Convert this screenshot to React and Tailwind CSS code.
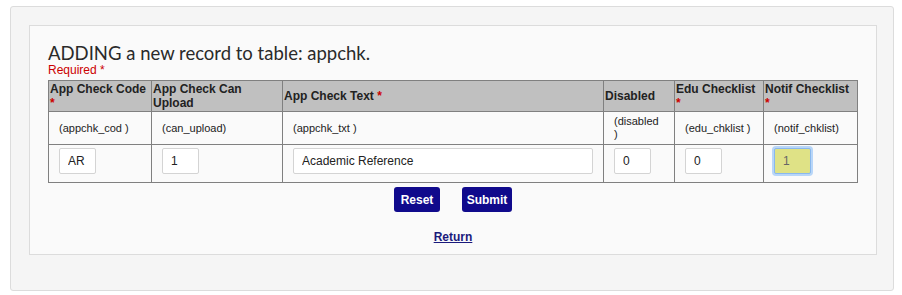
import React from 'react';

const cols = [
  { label: 'App Check Code', req: true, field: '(appchk_cod )', value: 'AR', w: 'w-[103px]' },
  { label: 'App Check Can Upload', req: false, field: '(can_upload)', value: '1', w: 'w-[131px]' },
  { label: 'App Check Text', req: true, inline: true, field: '(appchk_txt )', value: 'Academic Reference', w: 'w-[321px]', wide: true },
  { label: 'Disabled', req: false, field: '(disabled )', value: '0', w: 'w-[71px]' },
  { label: 'Edu Checklist', req: true, field: '(edu_chklist )', value: '0', w: 'w-[89px]' },
  { label: 'Notif Checklist', req: true, field: '(notif_chklist)', value: '1', w: 'w-[94px]', focus: true },
];

export default function App() {
  return (
    <div className="bg-white w-[902px] h-[295px] pt-[6px] pl-[10px] font-['Liberation_Sans',Arial,sans-serif]">
      <div className="w-[884px] h-[285px] bg-[#f5f5f5] border border-[#dcdcdc] rounded-[3px] pt-[18px] pl-[18px]">
        <div className="w-[848px] h-[230px] bg-[#fafafa] border border-[#dcdcdc] pt-[16px] pl-[18px]">
          <h1 className="text-[18.5px] leading-[22px] text-[#2a2a2a] font-['Lato',sans-serif] font-normal">
            ADDING a new record to table: appchk.
          </h1>
          <div className="text-[12px] leading-[13px] text-[#cc0000]">Required *</div>

          <table className="border-collapse table-fixed w-[810px] text-[11px] text-[#222] mt-[3px]">
            <thead>
              <tr className="h-[30px] bg-[#c0c0c0]">
                {cols.map((c) => (
                  <th
                    key={c.label}
                    className={`${c.w} border border-[#808080] px-[1px] py-[1px] text-left align-middle font-bold text-[12px] leading-[14px]`}
                  >
                    {c.label}
                    {c.req && c.inline && <span className="text-[#cc0000]"> *</span>}
                    {c.req && !c.inline && (
                      <>
                        <br />
                        <span className="text-[#cc0000]">*</span>
                      </>
                    )}
                  </th>
                ))}
              </tr>
            </thead>
            <tbody>
              <tr className="h-[33px]">
                {cols.map((c) => (
                  <td key={c.field} className="border border-[#808080] px-[10px] py-[2px] align-middle leading-[13px]">
                    {c.field}
                  </td>
                ))}
              </tr>
              <tr className="h-[38px]">
                {cols.map((c) => (
                  <td key={c.label + 'v'} className="border border-[#808080] px-[10px] pt-[3px] pb-[8px] align-top">
                    <input
                      type="text"
                      defaultValue={c.value}
                      className={`block ${c.wide ? 'w-full' : 'w-[37px]'} h-[26px] rounded-[2px] px-[8px] text-[12px] outline-none ${
                        c.focus
                          ? 'bg-[#dfe286] border border-[#8ab8ee] ring-2 ring-[#b8d6f8] text-[#666]'
                          : 'bg-white border border-[#d4d4d4] text-[#222]'
                      }`}
                    />
                  </td>
                ))}
              </tr>
            </tbody>
          </table>

          <div className="w-[810px] flex justify-center gap-[22px] mt-[4px]">
            <button className="h-[25px] w-[46px] rounded-[3px] bg-[#100a8c] text-white font-bold text-[12px]">
              Reset
            </button>
            <button className="h-[25px] w-[50px] rounded-[3px] bg-[#100a8c] text-white font-bold text-[12px]">
              Submit
            </button>
          </div>

          <div className="w-[810px] text-center mt-[17px] leading-[14px]">
            <a href="#" className="text-[12px] font-bold text-[#1a1a7c] underline">
              Return
            </a>
          </div>
        </div>
      </div>
    </div>
  );
}
